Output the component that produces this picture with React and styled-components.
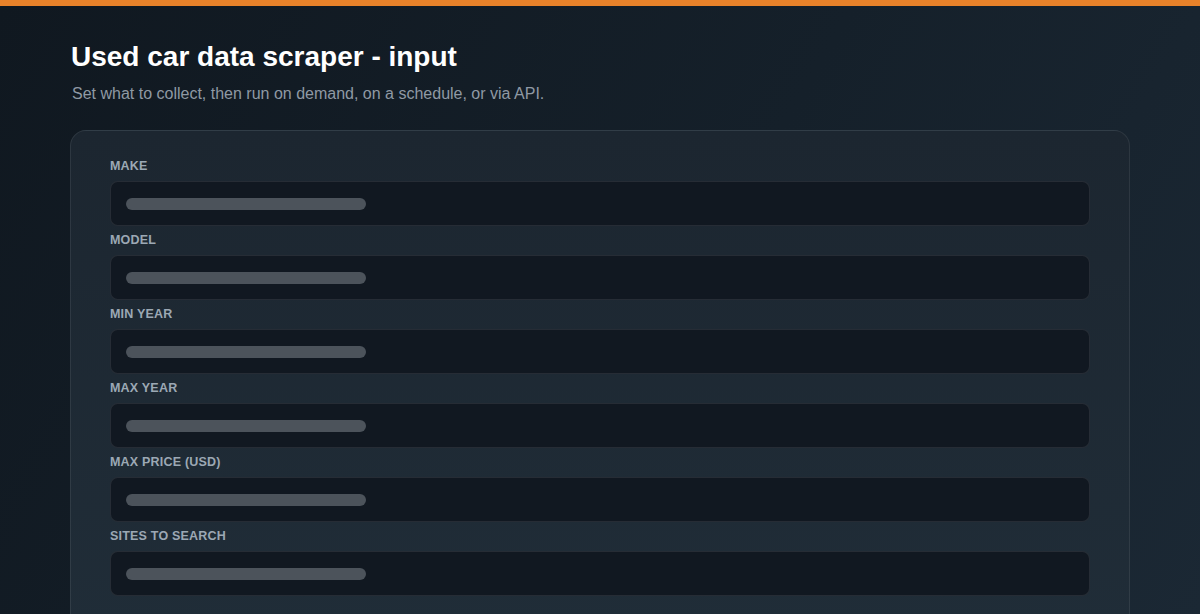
import React from 'react';
import styled, { createGlobalStyle } from 'styled-components';

const GlobalStyle = createGlobalStyle`
  html, body {
    margin: 0;
    padding: 0;
    background: #111a22;
  }
  body {
    font-family: "Liberation Sans", Arial, sans-serif;
  }
`;

const Page = styled.div`
  height: 614px;
  background: linear-gradient(120deg, #101820 0%, #15202a 55%, #1b2834 100%);
  border-top: 6px solid #e8822a;
  box-sizing: border-box;
  padding: 35px 70px 0;
  overflow: hidden;
`;

const Title = styled.h1`
  margin: 0 0 0 1px;
  font-size: 28px;
  line-height: 32px;
  font-weight: 700;
  color: #ffffff;
`;

const Subtitle = styled.p`
  margin: 11px 0 0 2px;
  font-size: 16px;
  line-height: 20px;
  color: #8f99a4;
`;

const Card = styled.div`
  margin-top: 26px;
  background: linear-gradient(180deg, #1c2630 0%, #202d38 100%);
  border: 1px solid rgba(255, 255, 255, 0.08);
  border-radius: 16px;
  padding: 27px 39px 40px;
  display: flex;
  flex-direction: column;
  gap: 6px;
`;

const Field = styled.div`
  display: flex;
  flex-direction: column;
`;

const Label = styled.label`
  font-size: 12.5px;
  line-height: 16px;
  font-weight: 700;
  letter-spacing: 0.2px;
  color: #9ca8b4;
  text-transform: uppercase;
  margin-bottom: 7px;
`;

const Input = styled.div`
  height: 43px;
  background: #111821;
  border: 1px solid rgba(255, 255, 255, 0.09);
  border-radius: 8px;
  display: flex;
  align-items: center;
  padding: 0 15px;
`;

const Placeholder = styled.span`
  display: block;
  width: ${(props) => props.width}px;
  height: 12px;
  border-radius: 6px;
  background: #4c535b;
`;

const fields = ['Make', 'Model', 'Min year', 'Max year', 'Max price (USD)', 'Sites to search'];

const App = () => (
  <>
    <GlobalStyle />
    <Page>
      <Title>Used car data scraper - input</Title>
      <Subtitle>Set what to collect, then run on demand, on a schedule, or via API.</Subtitle>
      <Card>
        {fields.map((name) => (
          <Field key={name}>
            <Label>{name}</Label>
            <Input>
              <Placeholder width={240} />
            </Input>
          </Field>
        ))}
      </Card>
    </Page>
  </>
);

export default App;
